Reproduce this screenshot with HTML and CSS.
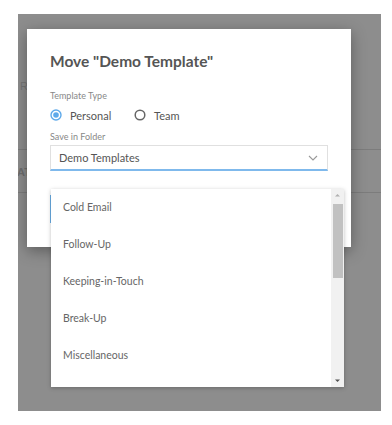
FILE: index.html
```html
<!DOCTYPE html>
<html>
<head>
<meta charset="utf-8">
<link rel="stylesheet" href="styles.css">
</head>
<body>
<div class="page">
  <div class="overlay">
    <div class="bg-text bg-r">R</div>
    <div class="bg-line bg-line1"></div>
    <div class="bg-text bg-at">AT</div>
    <div class="bg-line bg-line2"></div>
    <div class="modal">
      <h1 class="title">Move "Demo Template"</h1>
      <div class="label">Template Type</div>
      <div class="radios">
        <span class="radio">
          <svg width="12" height="12" viewBox="0 0 12 12"><circle cx="6" cy="6" r="5" fill="#fff" stroke="#5ea9ea" stroke-width="1.4"/><circle cx="6" cy="6" r="2.8" fill="#5ea9ea"/></svg>
          <span>Personal</span>
        </span>
        <span class="radio">
          <svg width="12" height="12" viewBox="0 0 12 12"><circle cx="6" cy="6" r="4.8" fill="#fff" stroke="#666" stroke-width="1.5"/></svg>
          <span>Team</span>
        </span>
      </div>
      <div class="label label2">Save in Folder</div>
      <div class="select">
        <span>Demo Templates</span>
        <svg class="chev" width="10" height="6" viewBox="0 0 10 6"><path d="M1 1 L5 5 L9 1" fill="none" stroke="#999" stroke-width="1.1"/></svg>
      </div>
      <div class="btn"></div>
    </div>
    <div class="dropdown">
      <ul class="items">
        <li>Cold Email</li>
        <li>Follow-Up</li>
        <li>Keeping-in-Touch</li>
        <li>Break-Up</li>
        <li>Miscellaneous</li>
      </ul>
      <div class="scrollbar">
        <svg class="arrow" width="13" height="12" viewBox="0 0 13 12"><path d="M4 7.5 L6.5 5 L9 7.5 Z" fill="#b0b0b0"/></svg>
        <div class="thumb"></div>
        <div class="spacer"></div>
        <svg class="arrow" width="13" height="12" viewBox="0 0 13 12"><path d="M4 4.5 L6.5 7 L9 4.5 Z" fill="#505050"/></svg>
      </div>
    </div>
  </div>
</div>
</body>
</html>
```

FILE: styles.css
```css
* { box-sizing: border-box; }
html, body { margin: 0; padding: 0; background: #fff; }
body { font-family: "Lato", "Liberation Sans", sans-serif; }

.page {
  padding: 14px 11px 14px 18px;
}
.overlay {
  position: relative;
  width: 363px;
  height: 397px;
  background: #8d8d8d;
  padding: 15px 0 0 9px;
  overflow: hidden;
}
.bg-text {
  position: absolute;
  color: #767676;
  font-size: 11px;
  font-family: "Liberation Sans", sans-serif;
}
.bg-r { left: 2px; top: 66px; }
.bg-at { left: -1px; top: 152px; font-weight: bold; color: #6e6e6e; }
.bg-line {
  position: absolute;
  left: 0; right: 0;
  height: 1px;
  background: #7c7c7c;
}
.bg-line1 { top: 135px; }
.bg-line2 { top: 178px; }

.modal {
  position: relative;
  width: 324px;
  height: 218px;
  background: #fff;
  box-shadow: 0 4px 14px rgba(0,0,0,0.35);
  padding: 22px 0 0 23px;
}
.title {
  margin: 0;
  font-size: 15.5px;
  line-height: 20px;
  font-weight: 700;
  color: #555;
}
.label {
  margin-top: 19px;
  font-size: 9px;
  line-height: 12px;
  color: #888;
}
.label2 { margin-top: 8px; }
.radios {
  margin-top: 5px;
  display: flex;
  gap: 15px;
  height: 16px;
  align-items: center;
}
.radio {
  display: flex;
  align-items: center;
  gap: 8px;
  font-size: 11px;
  color: #555;
}
.radio svg { display: block; }
.radio:first-child { width: 69px; }
.select {
  margin-top: 2px;
  width: 278px;
  height: 26px;
  border: 1px solid #e0e0e0;
  border-bottom: 2px solid #7fb9ec;
  display: flex;
  align-items: center;
  justify-content: space-between;
  padding: 0 9px 0 8px;
  font-size: 11px;
  color: #555;
}
.chev { display: block; }
.btn {
  margin-top: 24px;
  width: 90px;
  height: 28px;
  border-left: 2px solid #6aaee6;
}

.dropdown {
  position: absolute;
  left: 33px;
  top: 175px;
  width: 293px;
  height: 198px;
  background: #fff;
  box-shadow: 0 1px 4px rgba(0,0,0,0.25);
  display: flex;
}
.items {
  flex: 1;
  list-style: none;
  margin: 0;
  padding: 0;
}
.items li {
  height: 37px;
  line-height: 37px;
  padding-left: 12px;
  font-size: 10.5px;
  color: #666;
}
.scrollbar {
  width: 13px;
  background: #f1f1f1;
  display: flex;
  flex-direction: column;
}
.arrow { display: block; }
.thumb {
  margin: 3px 1px 0 2px;
  height: 74px;
  background: #c1c1c1;
}
.spacer { flex: 1; }
```
